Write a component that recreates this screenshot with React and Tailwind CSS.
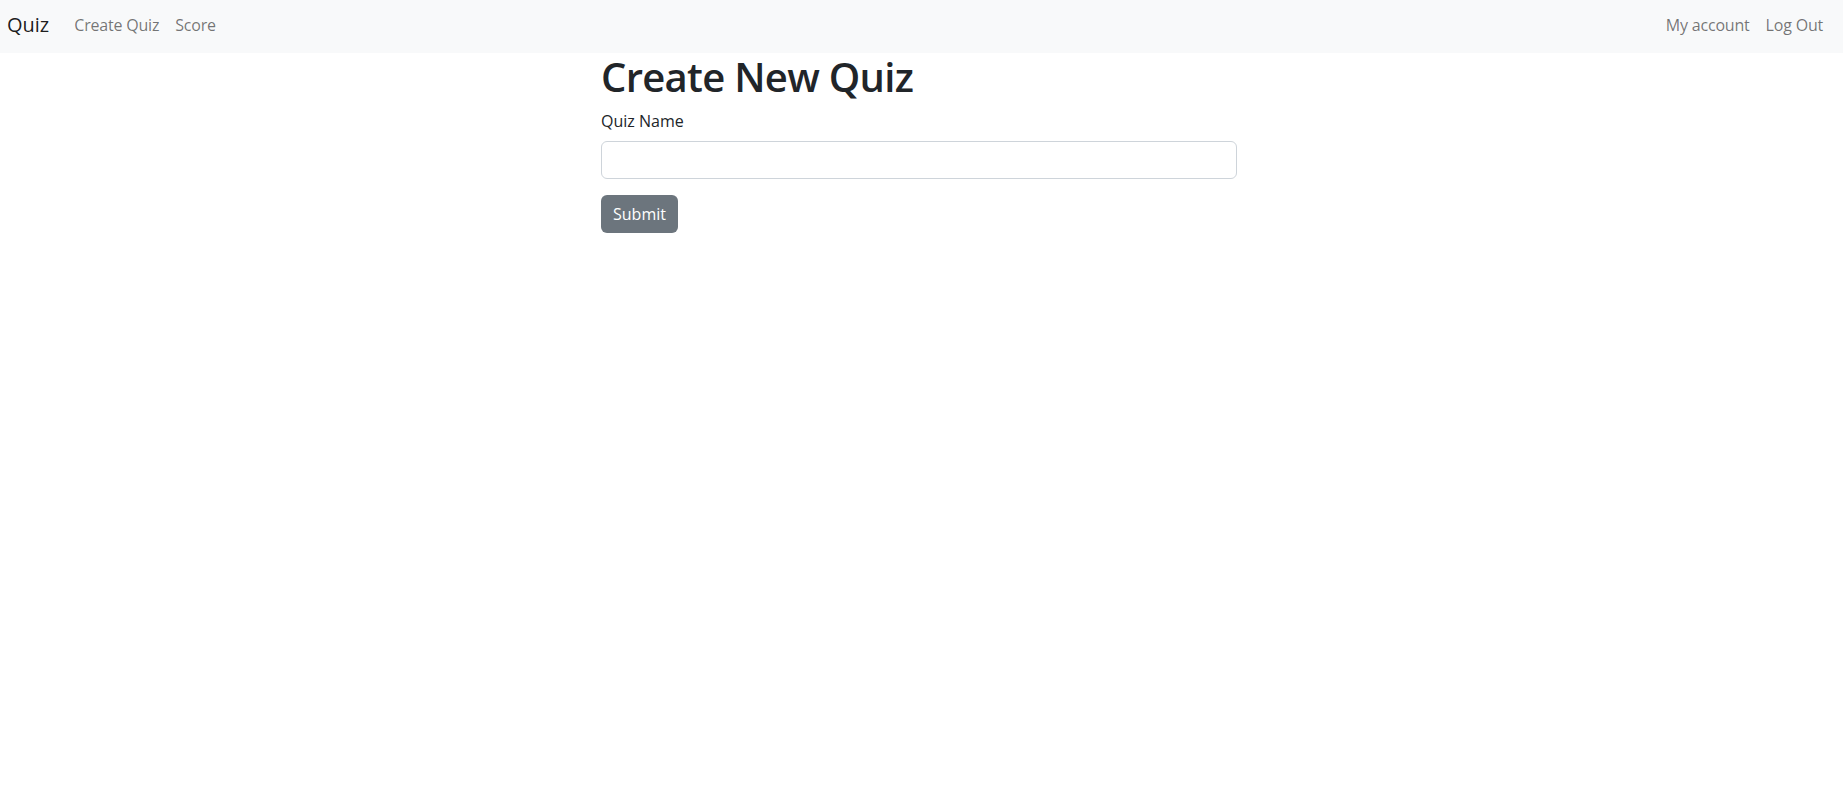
export default function App() {
  return (
    <div className="min-h-screen bg-white font-['Open_Sans',sans-serif] text-[#212529]">
      {/* Navbar */}
      <nav className="flex h-[53px] items-center justify-between bg-[#f8f9fa] pb-[4px] pl-[7px] pr-[12px]">
        <div className="flex items-center">
          <a className="mr-[17px] text-[20px] text-[rgba(0,0,0,0.9)]">Quiz</a>
          <a className="px-2 text-[16px] tracking-[-0.2px] text-[rgba(0,0,0,0.55)]">Create Quiz</a>
          <a className="px-2 text-[16px] tracking-[-0.2px] text-[rgba(0,0,0,0.55)]">Score</a>
        </div>
        <div className="flex items-center">
          <a className="px-2 text-[16px] tracking-[-0.2px] text-[rgba(0,0,0,0.55)]">My account</a>
          <a className="px-2 text-[16px] tracking-[-0.2px] text-[rgba(0,0,0,0.55)]">Log Out</a>
        </div>
      </nav>

      {/* Form */}
      <div className="ml-[601px] w-[636px]">
        <h1 className="mb-2 text-[40px] leading-[48px] font-semibold tracking-[-0.7px]">Create New Quiz</h1>
        <label className="mb-2 block text-[16px] leading-6">Quiz Name</label>
        <input
          type="text"
          className="mb-4 block h-[38px] w-full rounded-md border border-[#ced4da] bg-white px-3 text-[16px] outline-none"
        />
        <button className="h-[38px] rounded-md bg-[#6c757d] px-3 text-[16px] text-white">
          Submit
        </button>
      </div>
    </div>
  );
}
